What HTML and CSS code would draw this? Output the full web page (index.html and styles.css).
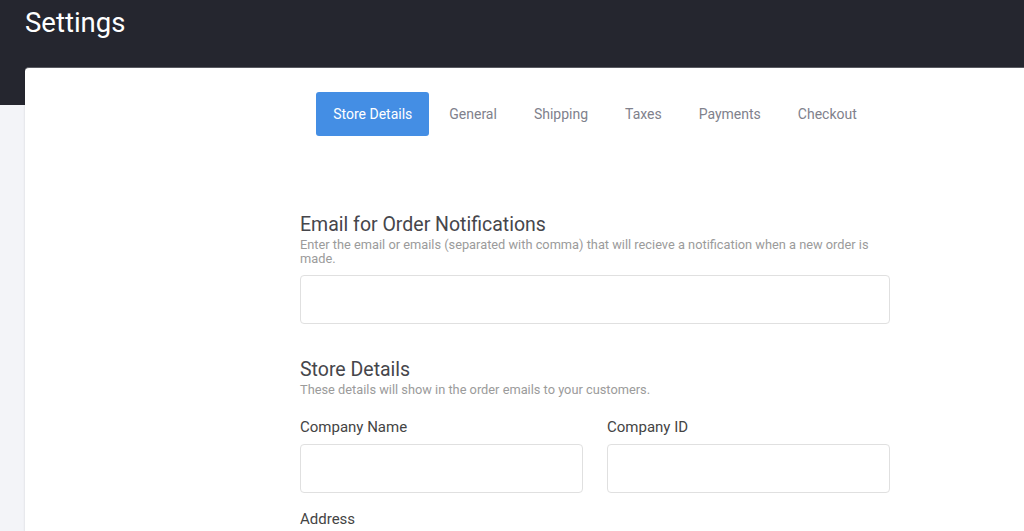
FILE: index.html
```html
<!DOCTYPE html>
<html lang="en">
<head>
    <meta charset="UTF-8">
    <meta name="viewport" content="width=device-width, initial-scale=1.0">
    <title>Settings</title>
    <link rel="stylesheet" href="styles.css">
</head>
<body>
    <div class="topbar">
        <h1>Settings</h1>
    </div>

    <div class="page">
        <div class="card">
            <div class="inner">
                <div class="tabs">
                    <button class="tab active">Store Details</button>
                    <button class="tab">General</button>
                    <button class="tab">Shipping</button>
                    <button class="tab">Taxes</button>
                    <button class="tab">Payments</button>
                    <button class="tab">Checkout</button>
                </div>

                <div class="section first">
                    <h2>Email for Order Notifications</h2>
                    <p class="hint">Enter the email or emails (separated with comma) that will recieve a notification when a new order is made.</p>
                    <input type="text" class="field">
                </div>

                <div class="section">
                    <h2>Store Details</h2>
                    <p class="hint">These details will show in the order emails to your customers.</p>
                    <div class="row">
                        <div class="group">
                            <label>Company Name</label>
                            <input type="text" class="field">
                        </div>
                        <div class="group">
                            <label>Company ID</label>
                            <input type="text" class="field">
                        </div>
                    </div>
                    <div class="group">
                        <label>Address</label>
                        <input type="text" class="field">
                    </div>
                </div>
            </div>
        </div>
    </div>
</body>
</html>
```

FILE: styles.css
```css
body {
    font-family: Roboto, "Liberation Sans", sans-serif;
    background: #f3f4f8;
    margin: 0;
    padding: 0;
    overflow: hidden;
}
.topbar {
    background: #25262f;
    height: 67px;
    padding-left: 25px;
}
.topbar h1 {
    margin: 0;
    padding-top: 6px;
    color: white;
    font-size: 27.5px;
    font-weight: 400;
    line-height: 34px;
}
.page {
    background: linear-gradient(to bottom, #25262f 38px, #f3f4f8 38px);
    padding-left: 25px;
}
.card {
    background: white;
    border-radius: 4px 0 0 0;
    border-top: 1px solid #5a5b62;
    box-shadow: -1px 0 2px rgba(0, 0, 0, 0.06);
    min-height: 600px;
}
.inner {
    width: 590px;
    margin-left: 275px;
    padding-top: 24px;
}
.tabs {
    display: flex;
    justify-content: center;
    gap: 3px;
}
.tab {
    font-family: inherit;
    font-size: 14px;
    color: #80818c;
    background: none;
    border: none;
    border-radius: 3px;
    padding: 0 17px;
    height: 44px;
    cursor: pointer;
}
.tab.active {
    background: #448ee4;
    color: white;
}
.section.first {
    margin-top: 77px;
}
.section {
    margin-top: 34px;
}
h2 {
    margin: 0;
    font-size: 19.5px;
    font-weight: 400;
    color: #46464b;
    line-height: 24px;
}
.hint {
    margin: 1px 0 9px;
    font-size: 12.8px;
    color: #9b9b9b;
    line-height: 14px;
}
.field {
    display: block;
    box-sizing: border-box;
    width: 100%;
    height: 49px;
    border: 1px solid #e0e0e0;
    border-radius: 4px;
    background: white;
    font-family: inherit;
}
.row {
    display: flex;
    gap: 24px;
    margin-top: 21px;
}
.row .group {
    flex: 1;
}
.group label {
    display: block;
    font-size: 15px;
    color: #444;
    line-height: 18px;
    margin-bottom: 8px;
}
.row + .group {
    margin-top: 17px;
}
```
